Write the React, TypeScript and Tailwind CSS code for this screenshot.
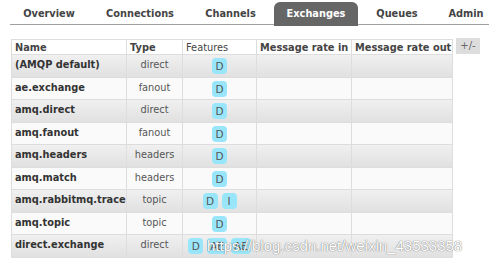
import React from "react";

const tabs = [
  { label: "Overview", w: "w-[78px]" },
  { label: "Connections", w: "w-[94px]" },
  { label: "Channels", w: "w-[77px]" },
  { label: "Exchanges", w: "w-[84px]", active: true },
  { label: "Queues", w: "w-[68px]" },
  { label: "Admin", w: "w-[60px]" },
];

const rows: { name: string; type: string; feats: string[] }[] = [
  { name: "(AMQP default)", type: "direct", feats: ["D"] },
  { name: "ae.exchange", type: "fanout", feats: ["D"] },
  { name: "amq.direct", type: "direct", feats: ["D"] },
  { name: "amq.fanout", type: "fanout", feats: ["D"] },
  { name: "amq.headers", type: "headers", feats: ["D"] },
  { name: "amq.match", type: "headers", feats: ["D"] },
  { name: "amq.rabbitmq.trace", type: "topic", feats: ["D", "I"] },
  { name: "amq.topic", type: "topic", feats: ["D"] },
  { name: "direct.exchange", type: "direct", feats: ["D", "AE", "AE"] },
];

function Badge({ t }: { t: string }) {
  return (
    <span className="inline-block rounded-[4px] bg-[#99e6fb] px-[3px] text-[10.5px] leading-[16px] text-[#555] min-w-[15px] text-center">
      {t}
    </span>
  );
}

export default function App() {
  return (
    <div
      className="relative w-[489px] h-[262px] bg-white overflow-hidden text-[#444]"
      style={{ fontFamily: "'DejaVu Sans', Verdana, sans-serif" }}
    >
      <div className="ml-[10px] pt-[2px] flex gap-[5px] border-b border-[#a0a0a0] h-[25px]">
        {tabs.map((t) => (
          <div
            key={t.label}
            className={`${t.w} shrink-0 h-[24px] flex items-center justify-center text-[9.8px] font-bold whitespace-nowrap ${
              t.active ? "bg-[#666] text-white rounded-t-[6px]" : "text-[#444]"
            }`}
          >
            {t.label}
          </div>
        ))}
      </div>

      <div className="flex items-start mt-[14px] ml-[11px]">
        <table className="table-fixed border-collapse w-[441px] text-[9.8px]">
          <colgroup>
            <col className="w-[115px]" />
            <col className="w-[56px]" />
            <col className="w-[74px]" />
            <col className="w-[95px]" />
            <col className="w-[101px]" />
          </colgroup>
          <thead>
            <tr className="h-[15px] bg-white">
              <th className="border border-[#ddd] text-left font-bold px-[3px] leading-[13px]">Name</th>
              <th className="border border-[#ddd] text-left font-bold px-[3px] leading-[13px]">Type</th>
              <th className="border border-[#ddd] text-left font-normal px-[3px] leading-[13px]">Features</th>
              <th className="border border-[#ddd] text-left font-bold px-[3px] leading-[13px] whitespace-nowrap">Message rate in</th>
              <th className="border border-[#ddd] text-left font-bold px-[3px] leading-[13px] whitespace-nowrap">Message rate out</th>
            </tr>
          </thead>
          <tbody>
            {rows.map((r, i) => (
              <tr
                key={r.name}
                className={`h-[22.5px] ${
                  i % 2 === 0 ? "bg-gradient-to-b from-[#f0f0f0] to-[#e0e0e0]" : "bg-[#fafafa]"
                }`}
              >
                <td className="border border-[#ddd] px-[3px] font-bold text-[#333] align-top pt-[3px] whitespace-nowrap">
                  {r.name}
                </td>
                <td className="border border-[#ddd] text-center text-[#555] align-top pt-[3px]">{r.type}</td>
                <td className="border border-[#ddd] text-center align-top pt-[3px]">
                  <span className="inline-flex gap-[4px]">
                    {r.feats.map((f, k) => (
                      <Badge key={k} t={f} />
                    ))}
                  </span>
                </td>
                <td className="border border-[#ddd]"></td>
                <td className="border border-[#ddd]"></td>
              </tr>
            ))}
          </tbody>
        </table>
        <div className="ml-[3px] -mt-[1px] w-[24px] h-[16px] bg-[#ddd] text-[#666] text-[10px] leading-[16px] text-center">
          +/-
        </div>
      </div>

      <div
        className="absolute left-[207px] top-[237px] text-[15px] leading-[18px] text-white whitespace-nowrap"
        style={{
          fontFamily: "'Liberation Sans', Arial, sans-serif",
          textShadow: "0 0 1px rgba(100,100,100,0.9), 0 0 1px rgba(100,100,100,0.6)",
        }}
      >
        https://blog.csdn.net/weixin_43533358
      </div>
    </div>
  );
}
